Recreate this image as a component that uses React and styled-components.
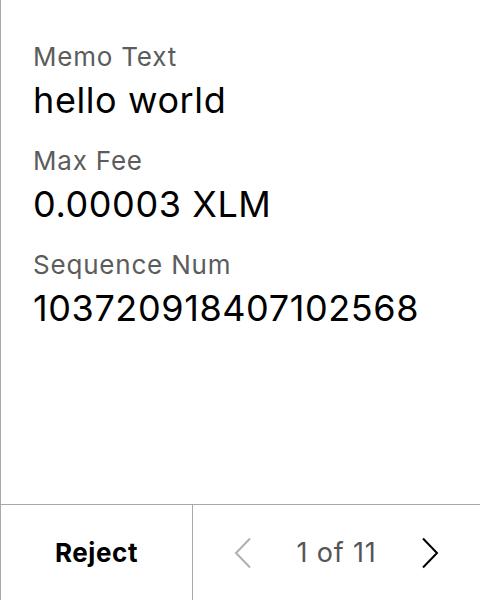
import React from "react";
import styled, { createGlobalStyle } from "styled-components";

const GlobalStyle = createGlobalStyle`
  html, body {
    margin: 0;
    padding: 0;
    background: #fff;
  }
  body {
    font-family: Inter, "Noto Sans", sans-serif;
  }
`;

// Whole screen, with the thin left edge
const Screen = styled.div`
  display: flex;
  flex-direction: column;
  width: 480px;
  height: 600px;
  box-sizing: border-box;
  border-left: 1px solid #a8a8a8;
  color: #000;
`;

// Field list
const Body = styled.div`
  flex: 1;
  display: flex;
  flex-direction: column;
  gap: 23px;
  padding: 41px 0 0 32px;
`;

const Field = styled.div`
  display: flex;
  flex-direction: column;
  gap: 5px;
`;

const Label = styled.div`
  font-size: 26px;
  line-height: 32px;
  letter-spacing: 0.8px;
  color: #5c5c5c;
`;

const Value = styled.div`
  font-size: 36px;
  line-height: 44px;
  letter-spacing: 0.6px;
  color: #000;
`;

// Bottom bar
const Footer = styled.div`
  display: flex;
  height: 95px;
  border-top: 1px solid #a8a8a8;
`;

const RejectButton = styled.button`
  width: 192px;
  border: none;
  border-right: 1px solid #a8a8a8;
  background: none;
  font-family: inherit;
  font-size: 26px;
  font-weight: 700;
  letter-spacing: 0.6px;
  color: #000;
  padding: 0;
`;

const Pager = styled.div`
  flex: 1;
  display: flex;
  align-items: center;
  justify-content: space-between;
  padding: 0 41px;
`;

const PageText = styled.span`
  font-size: 27px;
  letter-spacing: 0.8px;
  color: #555;
`;

const Arrow = ({ dir, color }) => (
  <svg width="18" height="32" viewBox="0 0 18 32">
    <path
      d={dir === "left" ? "M16 1.5 L2 16 L16 30.5" : "M2 1.5 L16 16 L2 30.5"}
      fill="none"
      stroke={color}
      strokeWidth="2"
    />
  </svg>
);

const fields = [
  { label: "Memo Text", value: "hello world" },
  { label: "Max Fee", value: "0.00003 XLM" },
  { label: "Sequence Num", value: "103720918407102568" },
];

const App = () => {
  return (
    <>
      <GlobalStyle />
      <Screen>
        <Body>
          {fields.map((f) => (
            <Field key={f.label}>
              <Label>{f.label}</Label>
              <Value>{f.value}</Value>
            </Field>
          ))}
        </Body>
        <Footer>
          <RejectButton>Reject</RejectButton>
          <Pager>
            <Arrow dir="left" color="#b0b0b0" />
            <PageText>1 of 11</PageText>
            <Arrow dir="right" color="#000" />
          </Pager>
        </Footer>
      </Screen>
    </>
  );
};

export default App;
